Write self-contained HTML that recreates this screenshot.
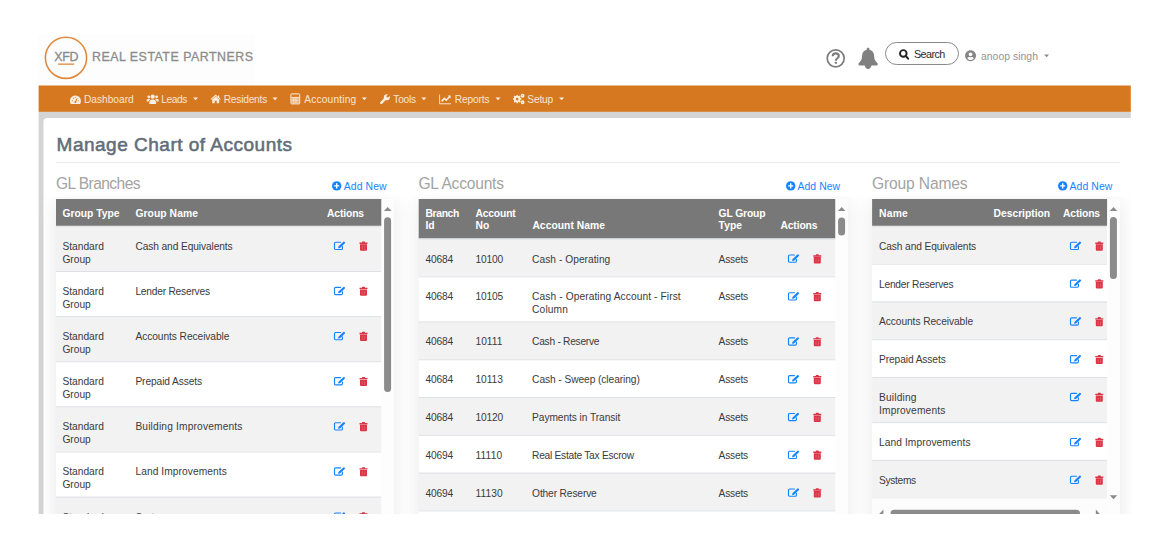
<!DOCTYPE html>
<html lang="en">
<head>
<meta charset="utf-8">
<title>Manage Chart of Accounts</title>
<style>
html,body{margin:0;padding:0;background:#fff}
body{width:1170px;height:550px;overflow:hidden;position:relative;font-family:"Liberation Sans",sans-serif}
#shot{position:absolute;left:38px;top:35px;width:1093px;height:479px;overflow:hidden;background:#fff}
#in{position:absolute;left:-38px;top:-35px;width:1170px;height:550px}
#in header,#in nav,#in main,#in section{position:absolute;left:0;top:0;width:0;height:0;display:block}
#in div,#in svg,.t{position:absolute;display:block;margin:0;padding:0}
.t{white-space:nowrap;font-weight:400;font-style:normal;text-decoration:none}
</style>
</head>
<body>
<div id="shot"><div id="in">
<header>
<svg style="left:38px;top:35px" width="218" height="52"><rect width="217" height="51" fill="#fdfdfd"/></svg>
<svg style="left:38px;top:35px" width="217" height="51" viewBox="38 35 217 51">
<circle cx="66" cy="57.8" r="20.600" fill="none" stroke="#e08a40" stroke-width="1.600"/>
<rect x="58" y="63.500" width="16.200" height="1.300" fill="#e08a40"/>
</svg>
<svg style="left:824px;top:46px" width="24" height="24" viewBox="824 46 24 24">
<circle cx="835.7" cy="58.3" r="8.500" fill="none" stroke="#7d7d7d" stroke-width="1.700"/>
<path d="M832.700 56.300c0-1.800 1.300-2.900 3-2.900 1.800 0 3.100 1.100 3.100 2.700 0 1.200-.7 1.800-1.600 2.400-.8.600-1.300 1-1.300 2v.3" fill="none" stroke="#7d7d7d" stroke-width="2.100"/>
<rect x="834.800" y="61.700" width="2.200" height="2.100" rx=".5" fill="#7d7d7d"/>
</svg>
<svg style="left:856px;top:46px" width="24" height="26" viewBox="856 46 24 26">
<path d="M868.100 47.800c.8 0 1.400.6 1.400 1.400v.5c2.700.6 4.600 3 4.600 5.900 0 3.900 1.200 5.600 3.200 7.400.5.500.7 1.100.4 1.700-.2.500-.7.800-1.300.800h-4.900c-.3 1.900-1.700 3.600-3.400 3.600s-3.100-1.700-3.400-3.600h-4.900c-.6 0-1.100-.3-1.300-.8-.3-.6-.1-1.200.4-1.700 2-1.800 3.200-3.500 3.200-7.400 0-2.900 1.900-5.300 4.600-5.900v-.5c0-.8.600-1.400 1.400-1.400z" fill="#808080"/>
</svg>
<div style="left:885.3px;top:42.3px;width:73.4px;height:22.6px;box-sizing:border-box;border:1px solid #8a8a8a;border-radius:11.5px;background:#fff"></div>
<svg style="left:897px;top:48px" width="14" height="14" viewBox="897 50 14 14">
<circle cx="903.300" cy="55.400" r="3.300" fill="none" stroke="#222" stroke-width="1.900"/>
<path d="M905.700 57.900l2.400 2.800" stroke="#222" stroke-width="2" stroke-linecap="round"/>
</svg>
<svg style="left:965px;top:50px" width="12" height="12"><g transform="translate(0.1 0.1) scale(0.0220 0.0219)"><path fill="#858585" fill-rule="evenodd" d="M248 8C111 8 0 119 0 256s111 248 248 248 248-111 248-248S385 8 248 8zm0 96c48.600 0 88 39.400 88 88s-39.400 88-88 88-88-39.400-88-88 39.400-88 88-88zm0 344c-58.700 0-111.300-26.600-146.500-68.200 18.800-35.400 55.600-59.800 98.500-59.800 2.400 0 4.800.4 7.100 1.100 13 4.200 26.600 6.900 40.900 6.900s28-2.700 40.900-6.900c2.300-.7 4.700-1.100 7.100-1.100 42.900 0 79.700 24.400 98.500 59.800C359.300 421.400 306.700 448 248 448z"/></g></svg>
<svg style="left:1044px;top:54px" width="6" height="4"><g transform="translate(0.1 0.5)"><path d="M0 0h5L2.500 2.800z" fill="#8a8a8a"/></g></svg>
<span class="t" style="left:54.2px;top:49px;font-size:12.4px;line-height:17px;color:#8a8a8a;letter-spacing:-0.27px;-webkit-text-stroke:.3px #8a8a8a;">XFD</span>
<span class="t" style="left:92px;top:49px;font-size:12.4px;line-height:17px;color:#8c8c8c;letter-spacing:0.5px;-webkit-text-stroke:.3px #8c8c8c;">REAL ESTATE PARTNERS</span>
<span class="t" style="left:914px;top:47px;font-size:10.8px;line-height:15px;color:#2a2a2a;letter-spacing:-0.6px;">Search</span>
<a class="t" href="#" style="left:981px;top:49px;font-size:10.4px;line-height:15px;color:#949494;letter-spacing:0.03px;">anoop singh</a>
</header>
<nav>
<svg style="left:38px;top:85px" width="1094" height="28"><g transform="translate(0.6 0.5)"><rect width="1092.2" height="26.4" fill="#d6781f"/></g></svg>
<svg style="left:69px;top:94px" width="14" height="13"><g transform="translate(0.4 0)"><path d="M6 1.500a5.500 5.500 0 0 0-4.800 8.200c.1.200.3.300.5.300h8.600c.2 0 .4-.1.500-.3A5.500 5.500 0 0 0 6 1.500z" fill="#fbeee0"/><path d="M6 8.200L7.700 4.300" stroke="#d6781f" stroke-width="1"/><circle cx="6" cy="8" r="1" fill="#d6781f"/><circle cx="3" cy="6.700" r=".55" fill="#d6781f"/><circle cx="9" cy="6.700" r=".55" fill="#d6781f"/><circle cx="4" cy="4.200" r=".55" fill="#d6781f"/><circle cx="6" cy="3.200" r=".55" fill="#d6781f"/></g></svg>
<svg style="left:146px;top:93px" width="14" height="13"><g transform="translate(0.7 0.4)"><circle cx="6" cy="3.300" r="2.100" fill="#fbeee0"/><circle cx="2.100" cy="3.400" r="1.400" fill="#fbeee0"/><circle cx="9.900" cy="3.400" r="1.400" fill="#fbeee0"/><path d="M2.600 10.500v-1.300c0-1.700 1.300-3 3-3h.8c1.700 0 3 1.300 3 3v1.300z" fill="#fbeee0"/><path d="M0 8.200v-1c0-1 .8-1.800 1.800-1.800h.6c.4 0 .8.100 1.100.4-.9.700-1.500 1.700-1.600 2.400zM12 8.200v-1c0-1-.8-1.800-1.800-1.800h-.6c-.4 0-.8.100-1.100.4.900.7 1.500 1.700 1.600 2.400z" fill="#fbeee0"/></g></svg>
<svg style="left:193px;top:97px" width="6" height="4"><g transform="translate(0.1 0.5)"><path d="M0 0h5L2.500 2.800z" fill="#fbeee0"/></g></svg>
<svg style="left:210px;top:93px" width="14" height="13"><g transform="translate(0.7 0.4)"><path d="M5 1.200L0 5.600l.6.700L5 2.500l4.400 3.800.6-.7-1.500-1.300V2h-1.200v1.300z" fill="#fbeee0"/><path d="M1.500 6.200L5 3.200l3.500 3v3.600H6V7.300H4v2.500H1.500z" fill="#fbeee0"/></g></svg>
<svg style="left:272px;top:97px" width="6" height="4"><g transform="translate(0.5 0.5)"><path d="M0 0h5L2.500 2.800z" fill="#fbeee0"/></g></svg>
<svg style="left:290px;top:93px" width="14" height="13"><g transform="translate(0.4 0.4)"><rect x=".5" y=".5" width="8.800" height="10" rx=".6" fill="none" stroke="#fbeee0" stroke-width="1"/><rect x="1" y="4" width="7.800" height="6" fill="#fbeee0" opacity=".55"/><path d="M1 4h7.800" stroke="#fbeee0" stroke-width=".9"/><path d="M3.200 4.400v5.600M5.500 4.400v5.600M1 6.800h6.500" stroke="#fbeee0" stroke-width=".7"/></g></svg>
<svg style="left:361px;top:97px" width="7" height="4"><g transform="translate(0.8 0.5)"><path d="M0 0h5L2.500 2.800z" fill="#fbeee0"/></g></svg>
<svg style="left:380px;top:93px" width="13" height="13"><g transform="translate(0 0.4)"><path d="M9.700 2.600L8.100 4.200 6.700 3.900 6.400 2.500 8 .9C6.900.5 5.600.8 4.700 1.700c-.9.900-1.100 2.100-.7 3.200L.4 8.500c-.5.500-.5 1.300 0 1.800s1.300.5 1.800 0l3.600-3.600c1.100.4 2.300.2 3.200-.7.900-.9 1.100-2.200.7-3.400z" fill="#fbeee0"/></g></svg>
<svg style="left:421px;top:97px" width="6" height="4"><g transform="translate(0.4 0.5)"><path d="M0 0h5L2.500 2.800z" fill="#fbeee0"/></g></svg>
<svg style="left:439px;top:93px" width="13" height="13"><g transform="translate(0 0.4)"><path d="M.6 1.300v9.100h11.400" fill="none" stroke="#fbeee0" stroke-width="1" opacity=".9"/><path d="M2.600 8l2.700-3 1.900 1.800 3.300-3.500" fill="none" stroke="#fbeee0" stroke-width="1.600"/><path d="M8.600 2.100h3v3z" fill="#fbeee0"/></g></svg>
<svg style="left:495px;top:97px" width="6" height="4"><g transform="translate(0.5 0.5)"><path d="M0 0h5L2.500 2.800z" fill="#fbeee0"/></g></svg>
<svg style="left:513px;top:93px" width="14" height="13"><g transform="translate(0.3 0.4)"><circle cx="3.900" cy="5.700" r="2.300" fill="none" stroke="#fbeee0" stroke-width="2"/><g stroke="#fbeee0" stroke-width="1.500"><path d="M3.900 1.500v8.400M-.3 5.700h8.400M.9 2.700l6 6M6.900 2.700l-6 6"/></g><circle cx="3.900" cy="5.700" r="1.300" fill="#d6781f"/><circle cx="9.300" cy="2.400" r="1.200" fill="none" stroke="#fbeee0" stroke-width="1.500"/><circle cx="9.300" cy="8.800" r="1.200" fill="none" stroke="#fbeee0" stroke-width="1.500"/></g></svg>
<svg style="left:559px;top:97px" width="6" height="4"><g transform="translate(0.1 0.5)"><path d="M0 0h5L2.500 2.800z" fill="#fbeee0"/></g></svg>
<a class="t" href="#" style="left:84px;top:93px;font-size:10.2px;line-height:14px;color:#f8e5d3;letter-spacing:-0.02px;">Dashboard</a>
<a class="t" href="#" style="left:161.3px;top:93px;font-size:10.2px;line-height:14px;color:#f8e5d3;letter-spacing:-0.41px;">Leads</a>
<a class="t" href="#" style="left:223.7px;top:93px;font-size:10.2px;line-height:14px;color:#f8e5d3;letter-spacing:-0.22px;">Residents</a>
<a class="t" href="#" style="left:304.3px;top:93px;font-size:10.2px;line-height:14px;color:#f8e5d3;letter-spacing:0.16px;">Accounting</a>
<a class="t" href="#" style="left:393.3px;top:93px;font-size:10.2px;line-height:14px;color:#f8e5d3;letter-spacing:-0.22px;">Tools</a>
<a class="t" href="#" style="left:454.7px;top:93px;font-size:10.2px;line-height:14px;color:#f8e5d3;letter-spacing:-0.12px;">Reports</a>
<a class="t" href="#" style="left:527.3px;top:93px;font-size:10.2px;line-height:14px;color:#f8e5d3;letter-spacing:-0.18px;">Setup</a>
</nav>
<main>
<svg style="left:38px;top:111px" width="1094" height="412"><g transform="translate(0.6 0.9)"><rect width="1092.2" height="410" fill="#d4d4d4"/></g></svg>
<svg style="left:43px;top:118px" width="1096" height="411"><g transform="translate(0.45 0)"><rect width="1095" height="410" rx="4" fill="#fff"/></g></svg>
<svg style="left:56px;top:162px" width="1065" height="2"><g transform="translate(0 0.2)"><rect width="1064" height="0.9" fill="#e9e9e9"/></g></svg>
<h1 class="t" style="left:56.6px;top:131px;font-size:19px;line-height:27px;color:#636d79;letter-spacing:0.5px;-webkit-text-stroke:.55px #636d79;">Manage Chart of Accounts</h1>
<div style="left:56px;top:199px;width:338px;height:330px;box-shadow:0 2px 20px rgba(0,0,0,.095);background:#fff"></div>
<div style="left:419px;top:199px;width:429px;height:330px;box-shadow:0 2px 20px rgba(0,0,0,.095);background:#fff"></div>
<div style="left:872px;top:199px;width:248px;height:330px;box-shadow:0 2px 20px rgba(0,0,0,.095);background:#fff"></div>
<div style="left:44px;top:164px;width:1087px;height:30px;background:#fff"></div><div style="left:44px;top:194px;width:1087px;height:5px;background:linear-gradient(#fff,rgba(255,255,255,0))"></div>
<section>
<svg style="left:332px;top:181px" width="10" height="11"><g transform="translate(0 0.2) scale(0.9400 0.9400)"><circle cx="5" cy="5" r="5" fill="#1584ff"/><path d="M5 2.300v5.400M2.300 5h5.400" stroke="#fff" stroke-width="1.500"/></g></svg>
<svg style="left:56px;top:199px" width="326" height="28"><rect width="325.5" height="26.9" fill="#787878"/></svg>
<svg style="left:56px;top:225px" width="326" height="47"><g transform="translate(0 0.9)"><rect width="325.5" height="45.12" fill="#f2f2f2"/></g></svg>
<svg style="left:56px;top:225px" width="326" height="3"><g transform="translate(0 0.9)"><rect width="325.5" height="1" fill="#dde1e5"/></g></svg>
<svg style="left:333px;top:241px" width="13" height="10"><g transform="translate(0.9 0.7) scale(1.0000 0.9767)"><path d="M6.600 .6H1.700a1.100 1.100 0 0 0-1.100 1.100v5.200a1.100 1.100 0 0 0 1.100 1.100h5.700a1.100 1.100 0 0 0 1.100-1.100V5" fill="none" stroke="#1584ff" stroke-width="1.150" stroke-linecap="round"/><path d="M9.500 .1a.7.7 0 0 1 1 0l.5.500a.7.7 0 0 1 0 1L6.100 6.400 4.200 6.700 4.500 4.900z" fill="#1584ff"/></g></svg>
<svg style="left:359px;top:241px" width="9" height="11"><g transform="translate(0.5 0.55) scale(1.0000 1.0222)"><path d="M3 0h2a.5.500 0 0 1 .5.500V1H8v1.400H0V1h2.500V.5A.5.500 0 0 1 3 0z" fill="#dc3545"/><path d="M.5 2.700h7v5.300a1 1 0 0 1-1 1h-5a1 1 0 0 1-1-1z" fill="#dc3545"/><path d="M2.800 4.200v3.500M5.200 4.200v3.500" stroke="#e8707b" stroke-width=".6"/></g></svg>
<svg style="left:56px;top:271px" width="326" height="46"><g transform="translate(0 0.02)"><rect width="325.5" height="45.12" fill="#fff"/></g></svg>
<svg style="left:56px;top:271px" width="326" height="2"><g transform="translate(0 0.02)"><rect width="325.5" height="1" fill="#dde1e5"/></g></svg>
<svg style="left:333px;top:286px" width="13" height="10"><g transform="translate(0.9 0.82) scale(1.0000 0.9767)"><path d="M6.600 .6H1.700a1.100 1.100 0 0 0-1.100 1.100v5.200a1.100 1.100 0 0 0 1.100 1.100h5.700a1.100 1.100 0 0 0 1.100-1.100V5" fill="none" stroke="#1584ff" stroke-width="1.150" stroke-linecap="round"/><path d="M9.500 .1a.7.7 0 0 1 1 0l.5.500a.7.7 0 0 1 0 1L6.100 6.400 4.200 6.700 4.500 4.900z" fill="#1584ff"/></g></svg>
<svg style="left:359px;top:286px" width="9" height="11"><g transform="translate(0.5 0.67) scale(1.0000 1.0222)"><path d="M3 0h2a.5.500 0 0 1 .5.500V1H8v1.400H0V1h2.500V.5A.5.500 0 0 1 3 0z" fill="#dc3545"/><path d="M.5 2.700h7v5.300a1 1 0 0 1-1 1h-5a1 1 0 0 1-1-1z" fill="#dc3545"/><path d="M2.800 4.200v3.500M5.200 4.200v3.500" stroke="#e8707b" stroke-width=".6"/></g></svg>
<svg style="left:56px;top:316px" width="326" height="46"><g transform="translate(0 0.14)"><rect width="325.5" height="45.12" fill="#f2f2f2"/></g></svg>
<svg style="left:56px;top:316px" width="326" height="2"><g transform="translate(0 0.14)"><rect width="325.5" height="1" fill="#dde1e5"/></g></svg>
<svg style="left:333px;top:331px" width="13" height="10"><g transform="translate(0.9 0.94) scale(1.0000 0.9767)"><path d="M6.600 .6H1.700a1.100 1.100 0 0 0-1.100 1.100v5.200a1.100 1.100 0 0 0 1.100 1.100h5.700a1.100 1.100 0 0 0 1.100-1.100V5" fill="none" stroke="#1584ff" stroke-width="1.150" stroke-linecap="round"/><path d="M9.500 .1a.7.7 0 0 1 1 0l.5.500a.7.7 0 0 1 0 1L6.100 6.400 4.200 6.700 4.500 4.900z" fill="#1584ff"/></g></svg>
<svg style="left:359px;top:331px" width="9" height="11"><g transform="translate(0.5 0.79) scale(1.0000 1.0222)"><path d="M3 0h2a.5.500 0 0 1 .5.500V1H8v1.400H0V1h2.500V.5A.5.500 0 0 1 3 0z" fill="#dc3545"/><path d="M.5 2.700h7v5.300a1 1 0 0 1-1 1h-5a1 1 0 0 1-1-1z" fill="#dc3545"/><path d="M2.800 4.200v3.500M5.200 4.200v3.500" stroke="#e8707b" stroke-width=".6"/></g></svg>
<svg style="left:56px;top:361px" width="326" height="46"><g transform="translate(0 0.26)"><rect width="325.5" height="45.12" fill="#fff"/></g></svg>
<svg style="left:56px;top:361px" width="326" height="2"><g transform="translate(0 0.26)"><rect width="325.5" height="1" fill="#dde1e5"/></g></svg>
<svg style="left:333px;top:377px" width="13" height="9"><g transform="translate(0.9 0.06) scale(1.0000 0.9767)"><path d="M6.600 .6H1.700a1.100 1.100 0 0 0-1.100 1.100v5.200a1.100 1.100 0 0 0 1.100 1.100h5.700a1.100 1.100 0 0 0 1.100-1.100V5" fill="none" stroke="#1584ff" stroke-width="1.150" stroke-linecap="round"/><path d="M9.500 .1a.7.7 0 0 1 1 0l.5.500a.7.7 0 0 1 0 1L6.100 6.400 4.200 6.700 4.500 4.900z" fill="#1584ff"/></g></svg>
<svg style="left:359px;top:376px" width="9" height="11"><g transform="translate(0.5 0.91) scale(1.0000 1.0222)"><path d="M3 0h2a.5.500 0 0 1 .5.500V1H8v1.400H0V1h2.500V.5A.5.500 0 0 1 3 0z" fill="#dc3545"/><path d="M.5 2.700h7v5.300a1 1 0 0 1-1 1h-5a1 1 0 0 1-1-1z" fill="#dc3545"/><path d="M2.800 4.200v3.500M5.200 4.200v3.500" stroke="#e8707b" stroke-width=".6"/></g></svg>
<svg style="left:56px;top:406px" width="326" height="46"><g transform="translate(0 0.38)"><rect width="325.5" height="45.12" fill="#f2f2f2"/></g></svg>
<svg style="left:56px;top:406px" width="326" height="2"><g transform="translate(0 0.38)"><rect width="325.5" height="1" fill="#dde1e5"/></g></svg>
<svg style="left:333px;top:422px" width="13" height="10"><g transform="translate(0.9 0.18) scale(1.0000 0.9767)"><path d="M6.600 .6H1.700a1.100 1.100 0 0 0-1.100 1.100v5.200a1.100 1.100 0 0 0 1.100 1.100h5.700a1.100 1.100 0 0 0 1.100-1.100V5" fill="none" stroke="#1584ff" stroke-width="1.150" stroke-linecap="round"/><path d="M9.500 .1a.7.7 0 0 1 1 0l.5.500a.7.7 0 0 1 0 1L6.100 6.400 4.200 6.700 4.500 4.900z" fill="#1584ff"/></g></svg>
<svg style="left:359px;top:422px" width="9" height="10"><g transform="translate(0.5 0.03) scale(1.0000 1.0222)"><path d="M3 0h2a.5.500 0 0 1 .5.500V1H8v1.400H0V1h2.500V.5A.5.500 0 0 1 3 0z" fill="#dc3545"/><path d="M.5 2.700h7v5.300a1 1 0 0 1-1 1h-5a1 1 0 0 1-1-1z" fill="#dc3545"/><path d="M2.800 4.200v3.500M5.200 4.200v3.500" stroke="#e8707b" stroke-width=".6"/></g></svg>
<svg style="left:56px;top:451px" width="326" height="47"><g transform="translate(0 0.5)"><rect width="325.5" height="45.12" fill="#fff"/></g></svg>
<svg style="left:56px;top:451px" width="326" height="2"><g transform="translate(0 0.5)"><rect width="325.5" height="1" fill="#dde1e5"/></g></svg>
<svg style="left:333px;top:467px" width="13" height="10"><g transform="translate(0.9 0.3) scale(1.0000 0.9767)"><path d="M6.600 .6H1.700a1.100 1.100 0 0 0-1.100 1.100v5.200a1.100 1.100 0 0 0 1.100 1.100h5.700a1.100 1.100 0 0 0 1.100-1.100V5" fill="none" stroke="#1584ff" stroke-width="1.150" stroke-linecap="round"/><path d="M9.500 .1a.7.7 0 0 1 1 0l.5.500a.7.7 0 0 1 0 1L6.100 6.400 4.200 6.700 4.500 4.900z" fill="#1584ff"/></g></svg>
<svg style="left:359px;top:467px" width="9" height="10"><g transform="translate(0.5 0.15) scale(1.0000 1.0222)"><path d="M3 0h2a.5.500 0 0 1 .5.500V1H8v1.400H0V1h2.500V.5A.5.500 0 0 1 3 0z" fill="#dc3545"/><path d="M.5 2.700h7v5.300a1 1 0 0 1-1 1h-5a1 1 0 0 1-1-1z" fill="#dc3545"/><path d="M2.800 4.200v3.500M5.200 4.200v3.500" stroke="#e8707b" stroke-width=".6"/></g></svg>
<svg style="left:56px;top:496px" width="326" height="47"><g transform="translate(0 0.62)"><rect width="325.5" height="45.12" fill="#f2f2f2"/></g></svg>
<svg style="left:56px;top:496px" width="326" height="3"><g transform="translate(0 0.62)"><rect width="325.5" height="1" fill="#dde1e5"/></g></svg>
<svg style="left:333px;top:512px" width="13" height="10"><g transform="translate(0.9 0.42) scale(1.0000 0.9767)"><path d="M6.600 .6H1.700a1.100 1.100 0 0 0-1.100 1.100v5.200a1.100 1.100 0 0 0 1.100 1.100h5.700a1.100 1.100 0 0 0 1.100-1.100V5" fill="none" stroke="#1584ff" stroke-width="1.150" stroke-linecap="round"/><path d="M9.500 .1a.7.7 0 0 1 1 0l.5.500a.7.7 0 0 1 0 1L6.100 6.400 4.200 6.700 4.500 4.900z" fill="#1584ff"/></g></svg>
<svg style="left:359px;top:512px" width="9" height="10"><g transform="translate(0.5 0.27) scale(1.0000 1.0222)"><path d="M3 0h2a.5.500 0 0 1 .5.500V1H8v1.400H0V1h2.500V.5A.5.500 0 0 1 3 0z" fill="#dc3545"/><path d="M.5 2.700h7v5.300a1 1 0 0 1-1 1h-5a1 1 0 0 1-1-1z" fill="#dc3545"/><path d="M2.800 4.200v3.500M5.200 4.200v3.500" stroke="#e8707b" stroke-width=".6"/></g></svg>
<svg style="left:381px;top:199px" width="14" height="322"><g transform="translate(0.6 0)"><rect width="12.4" height="321" fill="#fdfdfd"/></g></svg>
<svg style="left:381px;top:205px" width="14" height="9"><g transform="translate(0.6 0)"><path d="M2.300 5.900L6.100 1.900l3.800 4z" fill="#8b8b8b"/></g></svg>
<svg style="left:384px;top:217px" width="8" height="176"><g transform="translate(0.1 0.2)"><rect width="7" height="174.8" rx="3.5" fill="#8b8b8b"/></g></svg>
<h2 class="t" style="left:56px;top:173px;font-size:15.6px;line-height:22px;color:#a3a3a3;letter-spacing:-0.59px;">GL Branches</h2>
<a class="t" href="#" style="left:343.8px;top:179px;font-size:10.4px;line-height:15px;color:#1584ff;letter-spacing:0.09px;">Add New</a>
<b class="t" style="left:62.4px;top:207px;font-size:10.3px;line-height:14px;color:#fff;font-weight:700;">Group Type</b>
<b class="t" style="left:135.4px;top:207px;font-size:10.3px;line-height:14px;color:#fff;font-weight:700;letter-spacing:0.08px;">Group Name</b>
<b class="t" style="left:327px;top:207px;font-size:10.3px;line-height:14px;color:#fff;font-weight:700;letter-spacing:-0.11px;">Actions</b>
<span class="t" style="left:62.4px;top:240px;font-size:10.2px;line-height:14px;color:#3a3a3a;letter-spacing:0.01px;">Standard</span>
<span class="t" style="left:62.4px;top:253px;font-size:10.2px;line-height:14px;color:#3a3a3a;letter-spacing:0.01px;">Group</span>
<span class="t" style="left:135.4px;top:240px;font-size:10.2px;line-height:14px;color:#3a3a3a;letter-spacing:-0.1px;">Cash and Equivalents</span>
<span class="t" style="left:62.4px;top:285px;font-size:10.2px;line-height:14px;color:#3a3a3a;letter-spacing:0.01px;">Standard</span>
<span class="t" style="left:62.4px;top:298px;font-size:10.2px;line-height:14px;color:#3a3a3a;letter-spacing:0.01px;">Group</span>
<span class="t" style="left:135.4px;top:285px;font-size:10.2px;line-height:14px;color:#3a3a3a;letter-spacing:-0.21px;">Lender Reserves</span>
<span class="t" style="left:62.4px;top:330px;font-size:10.2px;line-height:14px;color:#3a3a3a;letter-spacing:0.01px;">Standard</span>
<span class="t" style="left:62.4px;top:343px;font-size:10.2px;line-height:14px;color:#3a3a3a;letter-spacing:0.01px;">Group</span>
<span class="t" style="left:135.4px;top:330px;font-size:10.2px;line-height:14px;color:#3a3a3a;letter-spacing:-0.06px;">Accounts Receivable</span>
<span class="t" style="left:62.4px;top:375px;font-size:10.2px;line-height:14px;color:#3a3a3a;letter-spacing:0.01px;">Standard</span>
<span class="t" style="left:62.4px;top:388px;font-size:10.2px;line-height:14px;color:#3a3a3a;letter-spacing:0.01px;">Group</span>
<span class="t" style="left:135.4px;top:375px;font-size:10.2px;line-height:14px;color:#3a3a3a;letter-spacing:-0.09px;">Prepaid Assets</span>
<span class="t" style="left:62.4px;top:420px;font-size:10.2px;line-height:14px;color:#3a3a3a;letter-spacing:0.01px;">Standard</span>
<span class="t" style="left:62.4px;top:433px;font-size:10.2px;line-height:14px;color:#3a3a3a;letter-spacing:0.01px;">Group</span>
<span class="t" style="left:135.4px;top:420px;font-size:10.2px;line-height:14px;color:#3a3a3a;letter-spacing:0.17px;">Building Improvements</span>
<span class="t" style="left:62.4px;top:465px;font-size:10.2px;line-height:14px;color:#3a3a3a;letter-spacing:0.01px;">Standard</span>
<span class="t" style="left:62.4px;top:478px;font-size:10.2px;line-height:14px;color:#3a3a3a;letter-spacing:0.01px;">Group</span>
<span class="t" style="left:135.4px;top:465px;font-size:10.2px;line-height:14px;color:#3a3a3a;letter-spacing:0.09px;">Land Improvements</span>
<span class="t" style="left:62.4px;top:511px;font-size:10.2px;line-height:14px;color:#3a3a3a;letter-spacing:0.01px;">Standard</span>
<span class="t" style="left:62.4px;top:523px;font-size:10.2px;line-height:14px;color:#3a3a3a;letter-spacing:0.01px;">Group</span>
<span class="t" style="left:135.4px;top:511px;font-size:10.2px;line-height:14px;color:#3a3a3a;letter-spacing:-0.32px;">Systems</span>
</section>
<section>
<svg style="left:786px;top:181px" width="10" height="11"><g transform="translate(0 0.2) scale(0.9400 0.9400)"><circle cx="5" cy="5" r="5" fill="#1584ff"/><path d="M5 2.300v5.400M2.300 5h5.400" stroke="#fff" stroke-width="1.500"/></g></svg>
<svg style="left:418px;top:199px" width="418" height="41"><g transform="translate(0.7 0)"><rect width="416.7" height="39.6" fill="#787878"/></g></svg>
<svg style="left:418px;top:238px" width="418" height="39"><g transform="translate(0.7 0.6)"><rect width="416.7" height="37.78" fill="#f2f2f2"/></g></svg>
<svg style="left:418px;top:238px" width="418" height="3"><g transform="translate(0.7 0.6)"><rect width="416.7" height="1" fill="#dde1e5"/></g></svg>
<svg style="left:787px;top:254px" width="13" height="10"><g transform="translate(0.9 0.4) scale(1.0000 0.9767)"><path d="M6.600 .6H1.700a1.100 1.100 0 0 0-1.100 1.100v5.200a1.100 1.100 0 0 0 1.100 1.100h5.700a1.100 1.100 0 0 0 1.100-1.100V5" fill="none" stroke="#1584ff" stroke-width="1.150" stroke-linecap="round"/><path d="M9.500 .1a.7.7 0 0 1 1 0l.5.500a.7.7 0 0 1 0 1L6.100 6.400 4.200 6.700 4.500 4.900z" fill="#1584ff"/></g></svg>
<svg style="left:813px;top:254px" width="9" height="10"><g transform="translate(0.3 0.25) scale(1.0000 1.0222)"><path d="M3 0h2a.5.500 0 0 1 .5.500V1H8v1.400H0V1h2.500V.5A.5.500 0 0 1 3 0z" fill="#dc3545"/><path d="M.5 2.700h7v5.300a1 1 0 0 1-1 1h-5a1 1 0 0 1-1-1z" fill="#dc3545"/><path d="M2.800 4.200v3.500M5.200 4.200v3.500" stroke="#e8707b" stroke-width=".6"/></g></svg>
<svg style="left:418px;top:276px" width="418" height="46"><g transform="translate(0.7 0.38)"><rect width="416.7" height="45.12" fill="#fff"/></g></svg>
<svg style="left:418px;top:276px" width="418" height="2"><g transform="translate(0.7 0.38)"><rect width="416.7" height="1" fill="#dde1e5"/></g></svg>
<svg style="left:787px;top:292px" width="13" height="10"><g transform="translate(0.9 0.18) scale(1.0000 0.9767)"><path d="M6.600 .6H1.700a1.100 1.100 0 0 0-1.100 1.100v5.200a1.100 1.100 0 0 0 1.100 1.100h5.700a1.100 1.100 0 0 0 1.100-1.100V5" fill="none" stroke="#1584ff" stroke-width="1.150" stroke-linecap="round"/><path d="M9.500 .1a.7.7 0 0 1 1 0l.5.500a.7.7 0 0 1 0 1L6.100 6.400 4.200 6.700 4.500 4.900z" fill="#1584ff"/></g></svg>
<svg style="left:813px;top:292px" width="9" height="10"><g transform="translate(0.3 0.03) scale(1.0000 1.0222)"><path d="M3 0h2a.5.500 0 0 1 .5.500V1H8v1.400H0V1h2.500V.5A.5.500 0 0 1 3 0z" fill="#dc3545"/><path d="M.5 2.700h7v5.300a1 1 0 0 1-1 1h-5a1 1 0 0 1-1-1z" fill="#dc3545"/><path d="M2.800 4.200v3.500M5.200 4.200v3.500" stroke="#e8707b" stroke-width=".6"/></g></svg>
<svg style="left:418px;top:321px" width="418" height="39"><g transform="translate(0.7 0.5)"><rect width="416.7" height="37.78" fill="#f2f2f2"/></g></svg>
<svg style="left:418px;top:321px" width="418" height="2"><g transform="translate(0.7 0.5)"><rect width="416.7" height="1" fill="#dde1e5"/></g></svg>
<svg style="left:787px;top:337px" width="13" height="10"><g transform="translate(0.9 0.3) scale(1.0000 0.9767)"><path d="M6.600 .6H1.700a1.100 1.100 0 0 0-1.100 1.100v5.200a1.100 1.100 0 0 0 1.100 1.100h5.700a1.100 1.100 0 0 0 1.100-1.100V5" fill="none" stroke="#1584ff" stroke-width="1.150" stroke-linecap="round"/><path d="M9.500 .1a.7.7 0 0 1 1 0l.5.500a.7.7 0 0 1 0 1L6.100 6.400 4.200 6.700 4.500 4.900z" fill="#1584ff"/></g></svg>
<svg style="left:813px;top:337px" width="9" height="10"><g transform="translate(0.3 0.15) scale(1.0000 1.0222)"><path d="M3 0h2a.5.500 0 0 1 .5.500V1H8v1.400H0V1h2.500V.5A.5.500 0 0 1 3 0z" fill="#dc3545"/><path d="M.5 2.700h7v5.300a1 1 0 0 1-1 1h-5a1 1 0 0 1-1-1z" fill="#dc3545"/><path d="M2.800 4.200v3.500M5.200 4.200v3.500" stroke="#e8707b" stroke-width=".6"/></g></svg>
<svg style="left:418px;top:359px" width="418" height="39"><g transform="translate(0.7 0.28)"><rect width="416.7" height="37.78" fill="#fff"/></g></svg>
<svg style="left:418px;top:359px" width="418" height="2"><g transform="translate(0.7 0.28)"><rect width="416.7" height="1" fill="#dde1e5"/></g></svg>
<svg style="left:787px;top:375px" width="13" height="9"><g transform="translate(0.9 0.08) scale(1.0000 0.9767)"><path d="M6.600 .6H1.700a1.100 1.100 0 0 0-1.100 1.100v5.200a1.100 1.100 0 0 0 1.100 1.100h5.700a1.100 1.100 0 0 0 1.100-1.100V5" fill="none" stroke="#1584ff" stroke-width="1.150" stroke-linecap="round"/><path d="M9.500 .1a.7.7 0 0 1 1 0l.5.500a.7.7 0 0 1 0 1L6.100 6.400 4.200 6.700 4.500 4.900z" fill="#1584ff"/></g></svg>
<svg style="left:813px;top:374px" width="9" height="11"><g transform="translate(0.3 0.93) scale(1.0000 1.0222)"><path d="M3 0h2a.5.500 0 0 1 .5.500V1H8v1.400H0V1h2.500V.5A.5.500 0 0 1 3 0z" fill="#dc3545"/><path d="M.5 2.700h7v5.300a1 1 0 0 1-1 1h-5a1 1 0 0 1-1-1z" fill="#dc3545"/><path d="M2.800 4.200v3.500M5.200 4.200v3.500" stroke="#e8707b" stroke-width=".6"/></g></svg>
<svg style="left:418px;top:397px" width="418" height="39"><g transform="translate(0.7 0.06)"><rect width="416.7" height="37.78" fill="#f2f2f2"/></g></svg>
<svg style="left:418px;top:397px" width="418" height="2"><g transform="translate(0.7 0.06)"><rect width="416.7" height="1" fill="#dde1e5"/></g></svg>
<svg style="left:787px;top:412px" width="13" height="10"><g transform="translate(0.9 0.86) scale(1.0000 0.9767)"><path d="M6.600 .6H1.700a1.100 1.100 0 0 0-1.100 1.100v5.200a1.100 1.100 0 0 0 1.100 1.100h5.700a1.100 1.100 0 0 0 1.100-1.100V5" fill="none" stroke="#1584ff" stroke-width="1.150" stroke-linecap="round"/><path d="M9.500 .1a.7.7 0 0 1 1 0l.5.500a.7.7 0 0 1 0 1L6.100 6.400 4.200 6.700 4.500 4.900z" fill="#1584ff"/></g></svg>
<svg style="left:813px;top:412px" width="9" height="11"><g transform="translate(0.3 0.71) scale(1.0000 1.0222)"><path d="M3 0h2a.5.500 0 0 1 .5.500V1H8v1.400H0V1h2.500V.5A.5.500 0 0 1 3 0z" fill="#dc3545"/><path d="M.5 2.700h7v5.300a1 1 0 0 1-1 1h-5a1 1 0 0 1-1-1z" fill="#dc3545"/><path d="M2.800 4.200v3.500M5.200 4.200v3.500" stroke="#e8707b" stroke-width=".6"/></g></svg>
<svg style="left:418px;top:434px" width="418" height="40"><g transform="translate(0.7 0.84)"><rect width="416.7" height="37.78" fill="#fff"/></g></svg>
<svg style="left:418px;top:434px" width="418" height="3"><g transform="translate(0.7 0.84)"><rect width="416.7" height="1" fill="#dde1e5"/></g></svg>
<svg style="left:787px;top:450px" width="13" height="10"><g transform="translate(0.9 0.64) scale(1.0000 0.9767)"><path d="M6.600 .6H1.700a1.100 1.100 0 0 0-1.100 1.100v5.200a1.100 1.100 0 0 0 1.100 1.100h5.700a1.100 1.100 0 0 0 1.100-1.100V5" fill="none" stroke="#1584ff" stroke-width="1.150" stroke-linecap="round"/><path d="M9.500 .1a.7.7 0 0 1 1 0l.5.500a.7.7 0 0 1 0 1L6.100 6.400 4.200 6.700 4.500 4.900z" fill="#1584ff"/></g></svg>
<svg style="left:813px;top:450px" width="9" height="11"><g transform="translate(0.3 0.49) scale(1.0000 1.0222)"><path d="M3 0h2a.5.500 0 0 1 .5.500V1H8v1.400H0V1h2.500V.5A.5.500 0 0 1 3 0z" fill="#dc3545"/><path d="M.5 2.700h7v5.300a1 1 0 0 1-1 1h-5a1 1 0 0 1-1-1z" fill="#dc3545"/><path d="M2.800 4.200v3.500M5.200 4.200v3.500" stroke="#e8707b" stroke-width=".6"/></g></svg>
<svg style="left:418px;top:472px" width="418" height="39"><g transform="translate(0.7 0.62)"><rect width="416.7" height="37.78" fill="#f2f2f2"/></g></svg>
<svg style="left:418px;top:472px" width="418" height="3"><g transform="translate(0.7 0.62)"><rect width="416.7" height="1" fill="#dde1e5"/></g></svg>
<svg style="left:787px;top:488px" width="13" height="10"><g transform="translate(0.9 0.42) scale(1.0000 0.9767)"><path d="M6.600 .6H1.700a1.100 1.100 0 0 0-1.100 1.100v5.200a1.100 1.100 0 0 0 1.100 1.100h5.700a1.100 1.100 0 0 0 1.100-1.100V5" fill="none" stroke="#1584ff" stroke-width="1.150" stroke-linecap="round"/><path d="M9.500 .1a.7.7 0 0 1 1 0l.5.500a.7.7 0 0 1 0 1L6.100 6.400 4.200 6.700 4.500 4.900z" fill="#1584ff"/></g></svg>
<svg style="left:813px;top:488px" width="9" height="10"><g transform="translate(0.3 0.27) scale(1.0000 1.0222)"><path d="M3 0h2a.5.500 0 0 1 .5.500V1H8v1.400H0V1h2.500V.5A.5.500 0 0 1 3 0z" fill="#dc3545"/><path d="M.5 2.700h7v5.300a1 1 0 0 1-1 1h-5a1 1 0 0 1-1-1z" fill="#dc3545"/><path d="M2.800 4.200v3.500M5.200 4.200v3.500" stroke="#e8707b" stroke-width=".6"/></g></svg>
<svg style="left:418px;top:510px" width="418" height="39"><g transform="translate(0.7 0.4)"><rect width="416.7" height="37.78" fill="#fff"/></g></svg>
<svg style="left:418px;top:510px" width="418" height="2"><g transform="translate(0.7 0.4)"><rect width="416.7" height="1" fill="#dde1e5"/></g></svg>
<svg style="left:835px;top:199px" width="14" height="322"><g transform="translate(0.6 0)"><rect width="12.4" height="321" fill="#fdfdfd"/></g></svg>
<svg style="left:835px;top:205px" width="14" height="9"><g transform="translate(0.6 0)"><path d="M2.300 5.900L6.100 1.900l3.800 4z" fill="#8b8b8b"/></g></svg>
<svg style="left:838px;top:217px" width="8" height="19"><g transform="translate(0.1 0.4)"><rect width="7" height="18" rx="3.5" fill="#8b8b8b"/></g></svg>
<h2 class="t" style="left:418.4px;top:173px;font-size:15.6px;line-height:22px;color:#a3a3a3;letter-spacing:-0.22px;">GL Accounts</h2>
<a class="t" href="#" style="left:797.4px;top:179px;font-size:10.4px;line-height:15px;color:#1584ff;letter-spacing:0.09px;">Add New</a>
<b class="t" style="left:425.4px;top:207px;font-size:10.3px;line-height:14px;color:#fff;font-weight:700;letter-spacing:-0.31px;">Branch</b>
<b class="t" style="left:425.4px;top:219px;font-size:10.3px;line-height:14px;color:#fff;font-weight:700;letter-spacing:0.02px;">Id</b>
<b class="t" style="left:475.4px;top:207px;font-size:10.3px;line-height:14px;color:#fff;font-weight:700;letter-spacing:-0.14px;">Account</b>
<b class="t" style="left:475.4px;top:219px;font-size:10.3px;line-height:14px;color:#fff;font-weight:700;letter-spacing:0.23px;">No</b>
<b class="t" style="left:532.4px;top:219px;font-size:10.3px;line-height:14px;color:#fff;font-weight:700;letter-spacing:0.04px;">Account Name</b>
<b class="t" style="left:718.6px;top:207px;font-size:10.3px;line-height:14px;color:#fff;font-weight:700;letter-spacing:-0.13px;">GL Group</b>
<b class="t" style="left:718.6px;top:219px;font-size:10.3px;line-height:14px;color:#fff;font-weight:700;letter-spacing:0.03px;">Type</b>
<b class="t" style="left:780.4px;top:219px;font-size:10.3px;line-height:14px;color:#fff;font-weight:700;letter-spacing:-0.11px;">Actions</b>
<span class="t" style="left:425.4px;top:253px;font-size:10.2px;line-height:14px;color:#3a3a3a;letter-spacing:-0.15px;">40684</span>
<span class="t" style="left:475.4px;top:253px;font-size:10.2px;line-height:14px;color:#3a3a3a;letter-spacing:-0.15px;">10100</span>
<span class="t" style="left:532.1px;top:253px;font-size:10.2px;line-height:14px;color:#3a3a3a;letter-spacing:0.04px;">Cash - Operating</span>
<span class="t" style="left:718.6px;top:253px;font-size:10.2px;line-height:14px;color:#3a3a3a;letter-spacing:-0.2px;">Assets</span>
<span class="t" style="left:425.4px;top:290px;font-size:10.2px;line-height:14px;color:#3a3a3a;letter-spacing:-0.15px;">40684</span>
<span class="t" style="left:475.4px;top:290px;font-size:10.2px;line-height:14px;color:#3a3a3a;letter-spacing:-0.15px;">10105</span>
<span class="t" style="left:532.1px;top:290px;font-size:10.2px;line-height:14px;color:#3a3a3a;letter-spacing:0.1px;">Cash - Operating Account - First</span>
<span class="t" style="left:532.1px;top:303px;font-size:10.2px;line-height:14px;color:#3a3a3a;letter-spacing:0.13px;">Column</span>
<span class="t" style="left:718.6px;top:290px;font-size:10.2px;line-height:14px;color:#3a3a3a;letter-spacing:-0.2px;">Assets</span>
<span class="t" style="left:425.4px;top:335px;font-size:10.2px;line-height:14px;color:#3a3a3a;letter-spacing:-0.15px;">40684</span>
<span class="t" style="left:475.4px;top:335px;font-size:10.2px;line-height:14px;color:#3a3a3a;letter-spacing:0.07px;">10111</span>
<span class="t" style="left:532.1px;top:335px;font-size:10.2px;line-height:14px;color:#3a3a3a;letter-spacing:-0.26px;">Cash - Reserve</span>
<span class="t" style="left:718.6px;top:335px;font-size:10.2px;line-height:14px;color:#3a3a3a;letter-spacing:-0.2px;">Assets</span>
<span class="t" style="left:425.4px;top:373px;font-size:10.2px;line-height:14px;color:#3a3a3a;letter-spacing:-0.15px;">40684</span>
<span class="t" style="left:475.4px;top:373px;font-size:10.2px;line-height:14px;color:#3a3a3a;letter-spacing:-0.04px;">10113</span>
<span class="t" style="left:532.1px;top:373px;font-size:10.2px;line-height:14px;color:#3a3a3a;letter-spacing:-0.07px;">Cash - Sweep (clearing)</span>
<span class="t" style="left:718.6px;top:373px;font-size:10.2px;line-height:14px;color:#3a3a3a;letter-spacing:-0.2px;">Assets</span>
<span class="t" style="left:425.4px;top:411px;font-size:10.2px;line-height:14px;color:#3a3a3a;letter-spacing:-0.15px;">40684</span>
<span class="t" style="left:475.4px;top:411px;font-size:10.2px;line-height:14px;color:#3a3a3a;letter-spacing:-0.15px;">10120</span>
<span class="t" style="left:532.1px;top:411px;font-size:10.2px;line-height:14px;color:#3a3a3a;letter-spacing:-0.07px;">Payments in Transit</span>
<span class="t" style="left:718.6px;top:411px;font-size:10.2px;line-height:14px;color:#3a3a3a;letter-spacing:-0.2px;">Assets</span>
<span class="t" style="left:425.4px;top:449px;font-size:10.2px;line-height:14px;color:#3a3a3a;letter-spacing:-0.15px;">40694</span>
<span class="t" style="left:475.4px;top:449px;font-size:10.2px;line-height:14px;color:#3a3a3a;letter-spacing:0.19px;">11110</span>
<span class="t" style="left:532.1px;top:449px;font-size:10.2px;line-height:14px;color:#3a3a3a;letter-spacing:-0.26px;">Real Estate Tax Escrow</span>
<span class="t" style="left:718.6px;top:449px;font-size:10.2px;line-height:14px;color:#3a3a3a;letter-spacing:-0.2px;">Assets</span>
<span class="t" style="left:425.4px;top:487px;font-size:10.2px;line-height:14px;color:#3a3a3a;letter-spacing:-0.15px;">40694</span>
<span class="t" style="left:475.4px;top:487px;font-size:10.2px;line-height:14px;color:#3a3a3a;letter-spacing:0.11px;">11130</span>
<span class="t" style="left:532.1px;top:487px;font-size:10.2px;line-height:14px;color:#3a3a3a;letter-spacing:-0.13px;">Other Reserve</span>
<span class="t" style="left:718.6px;top:487px;font-size:10.2px;line-height:14px;color:#3a3a3a;letter-spacing:-0.2px;">Assets</span>
</section>
<section>
<svg style="left:1058px;top:181px" width="10" height="11"><g transform="translate(0 0.2) scale(0.9400 0.9400)"><circle cx="5" cy="5" r="5" fill="#1584ff"/><path d="M5 2.300v5.400M2.300 5h5.400" stroke="#fff" stroke-width="1.500"/></g></svg>
<svg style="left:872px;top:199px" width="236" height="28"><g transform="translate(0.1 0)"><rect width="235.1" height="26.9" fill="#787878"/></g></svg>
<svg style="left:872px;top:225px" width="236" height="40"><g transform="translate(0.1 0.9)"><rect width="235.1" height="37.78" fill="#f2f2f2"/></g></svg>
<svg style="left:872px;top:225px" width="236" height="3"><g transform="translate(0.1 0.9)"><rect width="235.1" height="1" fill="#dde1e5"/></g></svg>
<svg style="left:1069px;top:241px" width="13" height="10"><g transform="translate(0.9 0.7) scale(1.0000 0.9767)"><path d="M6.600 .6H1.700a1.100 1.100 0 0 0-1.100 1.100v5.200a1.100 1.100 0 0 0 1.100 1.100h5.700a1.100 1.100 0 0 0 1.100-1.100V5" fill="none" stroke="#1584ff" stroke-width="1.150" stroke-linecap="round"/><path d="M9.500 .1a.7.7 0 0 1 1 0l.5.500a.7.7 0 0 1 0 1L6.100 6.400 4.200 6.700 4.500 4.900z" fill="#1584ff"/></g></svg>
<svg style="left:1095px;top:241px" width="9" height="11"><g transform="translate(0.3 0.55) scale(1.0000 1.0222)"><path d="M3 0h2a.5.500 0 0 1 .5.500V1H8v1.400H0V1h2.500V.5A.5.500 0 0 1 3 0z" fill="#dc3545"/><path d="M.5 2.700h7v5.300a1 1 0 0 1-1 1h-5a1 1 0 0 1-1-1z" fill="#dc3545"/><path d="M2.800 4.200v3.500M5.200 4.200v3.500" stroke="#e8707b" stroke-width=".6"/></g></svg>
<svg style="left:872px;top:263px" width="236" height="39"><g transform="translate(0.1 0.68)"><rect width="235.1" height="37.78" fill="#fff"/></g></svg>
<svg style="left:872px;top:263px" width="236" height="3"><g transform="translate(0.1 0.68)"><rect width="235.1" height="1" fill="#dde1e5"/></g></svg>
<svg style="left:1069px;top:279px" width="13" height="10"><g transform="translate(0.9 0.48) scale(1.0000 0.9767)"><path d="M6.600 .6H1.700a1.100 1.100 0 0 0-1.100 1.100v5.200a1.100 1.100 0 0 0 1.100 1.100h5.700a1.100 1.100 0 0 0 1.100-1.100V5" fill="none" stroke="#1584ff" stroke-width="1.150" stroke-linecap="round"/><path d="M9.500 .1a.7.7 0 0 1 1 0l.5.500a.7.7 0 0 1 0 1L6.100 6.400 4.200 6.700 4.500 4.900z" fill="#1584ff"/></g></svg>
<svg style="left:1095px;top:279px" width="9" height="11"><g transform="translate(0.3 0.33) scale(1.0000 1.0222)"><path d="M3 0h2a.5.500 0 0 1 .5.500V1H8v1.400H0V1h2.500V.5A.5.500 0 0 1 3 0z" fill="#dc3545"/><path d="M.5 2.700h7v5.300a1 1 0 0 1-1 1h-5a1 1 0 0 1-1-1z" fill="#dc3545"/><path d="M2.800 4.200v3.500M5.200 4.200v3.500" stroke="#e8707b" stroke-width=".6"/></g></svg>
<svg style="left:872px;top:301px" width="236" height="39"><g transform="translate(0.1 0.46)"><rect width="235.1" height="37.78" fill="#f2f2f2"/></g></svg>
<svg style="left:872px;top:301px" width="236" height="2"><g transform="translate(0.1 0.46)"><rect width="235.1" height="1" fill="#dde1e5"/></g></svg>
<svg style="left:1069px;top:317px" width="13" height="10"><g transform="translate(0.9 0.26) scale(1.0000 0.9767)"><path d="M6.600 .6H1.700a1.100 1.100 0 0 0-1.100 1.100v5.200a1.100 1.100 0 0 0 1.100 1.100h5.700a1.100 1.100 0 0 0 1.100-1.100V5" fill="none" stroke="#1584ff" stroke-width="1.150" stroke-linecap="round"/><path d="M9.500 .1a.7.7 0 0 1 1 0l.5.500a.7.7 0 0 1 0 1L6.100 6.400 4.200 6.700 4.500 4.900z" fill="#1584ff"/></g></svg>
<svg style="left:1095px;top:317px" width="9" height="10"><g transform="translate(0.3 0.11) scale(1.0000 1.0222)"><path d="M3 0h2a.5.500 0 0 1 .5.500V1H8v1.400H0V1h2.500V.5A.5.500 0 0 1 3 0z" fill="#dc3545"/><path d="M.5 2.700h7v5.300a1 1 0 0 1-1 1h-5a1 1 0 0 1-1-1z" fill="#dc3545"/><path d="M2.800 4.200v3.500M5.200 4.200v3.500" stroke="#e8707b" stroke-width=".6"/></g></svg>
<svg style="left:872px;top:339px" width="236" height="39"><g transform="translate(0.1 0.24)"><rect width="235.1" height="37.78" fill="#fff"/></g></svg>
<svg style="left:872px;top:339px" width="236" height="2"><g transform="translate(0.1 0.24)"><rect width="235.1" height="1" fill="#dde1e5"/></g></svg>
<svg style="left:1069px;top:355px" width="13" height="9"><g transform="translate(0.9 0.04) scale(1.0000 0.9767)"><path d="M6.600 .6H1.700a1.100 1.100 0 0 0-1.100 1.100v5.200a1.100 1.100 0 0 0 1.100 1.100h5.700a1.100 1.100 0 0 0 1.100-1.100V5" fill="none" stroke="#1584ff" stroke-width="1.150" stroke-linecap="round"/><path d="M9.500 .1a.7.7 0 0 1 1 0l.5.500a.7.7 0 0 1 0 1L6.100 6.400 4.200 6.700 4.500 4.900z" fill="#1584ff"/></g></svg>
<svg style="left:1095px;top:354px" width="9" height="11"><g transform="translate(0.3 0.89) scale(1.0000 1.0222)"><path d="M3 0h2a.5.500 0 0 1 .5.500V1H8v1.400H0V1h2.500V.5A.5.500 0 0 1 3 0z" fill="#dc3545"/><path d="M.5 2.700h7v5.300a1 1 0 0 1-1 1h-5a1 1 0 0 1-1-1z" fill="#dc3545"/><path d="M2.800 4.200v3.500M5.200 4.200v3.500" stroke="#e8707b" stroke-width=".6"/></g></svg>
<svg style="left:872px;top:377px" width="236" height="46"><g transform="translate(0.1 0.02)"><rect width="235.1" height="45.12" fill="#f2f2f2"/></g></svg>
<svg style="left:872px;top:377px" width="236" height="2"><g transform="translate(0.1 0.02)"><rect width="235.1" height="1" fill="#dde1e5"/></g></svg>
<svg style="left:1069px;top:392px" width="13" height="10"><g transform="translate(0.9 0.82) scale(1.0000 0.9767)"><path d="M6.600 .6H1.700a1.100 1.100 0 0 0-1.100 1.100v5.200a1.100 1.100 0 0 0 1.100 1.100h5.700a1.100 1.100 0 0 0 1.100-1.100V5" fill="none" stroke="#1584ff" stroke-width="1.150" stroke-linecap="round"/><path d="M9.500 .1a.7.7 0 0 1 1 0l.5.500a.7.7 0 0 1 0 1L6.100 6.400 4.200 6.700 4.500 4.900z" fill="#1584ff"/></g></svg>
<svg style="left:1095px;top:392px" width="9" height="11"><g transform="translate(0.3 0.67) scale(1.0000 1.0222)"><path d="M3 0h2a.5.500 0 0 1 .5.500V1H8v1.400H0V1h2.500V.5A.5.500 0 0 1 3 0z" fill="#dc3545"/><path d="M.5 2.700h7v5.300a1 1 0 0 1-1 1h-5a1 1 0 0 1-1-1z" fill="#dc3545"/><path d="M2.800 4.200v3.500M5.200 4.200v3.500" stroke="#e8707b" stroke-width=".6"/></g></svg>
<svg style="left:872px;top:422px" width="236" height="39"><g transform="translate(0.1 0.14)"><rect width="235.1" height="37.78" fill="#fff"/></g></svg>
<svg style="left:872px;top:422px" width="236" height="2"><g transform="translate(0.1 0.14)"><rect width="235.1" height="1" fill="#dde1e5"/></g></svg>
<svg style="left:1069px;top:437px" width="13" height="10"><g transform="translate(0.9 0.94) scale(1.0000 0.9767)"><path d="M6.600 .6H1.700a1.100 1.100 0 0 0-1.100 1.100v5.200a1.100 1.100 0 0 0 1.100 1.100h5.700a1.100 1.100 0 0 0 1.100-1.100V5" fill="none" stroke="#1584ff" stroke-width="1.150" stroke-linecap="round"/><path d="M9.500 .1a.7.7 0 0 1 1 0l.5.500a.7.7 0 0 1 0 1L6.100 6.400 4.200 6.700 4.500 4.900z" fill="#1584ff"/></g></svg>
<svg style="left:1095px;top:437px" width="9" height="11"><g transform="translate(0.3 0.79) scale(1.0000 1.0222)"><path d="M3 0h2a.5.500 0 0 1 .5.500V1H8v1.400H0V1h2.500V.5A.5.500 0 0 1 3 0z" fill="#dc3545"/><path d="M.5 2.700h7v5.300a1 1 0 0 1-1 1h-5a1 1 0 0 1-1-1z" fill="#dc3545"/><path d="M2.800 4.200v3.500M5.200 4.200v3.500" stroke="#e8707b" stroke-width=".6"/></g></svg>
<svg style="left:872px;top:459px" width="236" height="41"><g transform="translate(0.1 0.92)"><rect width="235.1" height="38.9" fill="#f2f2f2"/></g></svg>
<svg style="left:872px;top:459px" width="236" height="3"><g transform="translate(0.1 0.92)"><rect width="235.1" height="1" fill="#dde1e5"/></g></svg>
<svg style="left:1069px;top:475px" width="13" height="10"><g transform="translate(0.9 0.72) scale(1.0000 0.9767)"><path d="M6.600 .6H1.700a1.100 1.100 0 0 0-1.100 1.100v5.200a1.100 1.100 0 0 0 1.100 1.100h5.700a1.100 1.100 0 0 0 1.100-1.100V5" fill="none" stroke="#1584ff" stroke-width="1.150" stroke-linecap="round"/><path d="M9.500 .1a.7.7 0 0 1 1 0l.5.500a.7.7 0 0 1 0 1L6.100 6.400 4.200 6.700 4.500 4.900z" fill="#1584ff"/></g></svg>
<svg style="left:1095px;top:475px" width="9" height="11"><g transform="translate(0.3 0.57) scale(1.0000 1.0222)"><path d="M3 0h2a.5.500 0 0 1 .5.500V1H8v1.400H0V1h2.500V.5A.5.500 0 0 1 3 0z" fill="#dc3545"/><path d="M.5 2.700h7v5.300a1 1 0 0 1-1 1h-5a1 1 0 0 1-1-1z" fill="#dc3545"/><path d="M2.800 4.200v3.500M5.200 4.200v3.500" stroke="#e8707b" stroke-width=".6"/></g></svg>
<svg style="left:872px;top:498px" width="237" height="22"><g transform="translate(0.1 0.8)"><rect width="236" height="20" fill="#fcfcfc"/></g></svg>
<svg style="left:1107px;top:199px" width="14" height="305"><g transform="translate(0.4 0)"><rect width="12.4" height="304" fill="#fdfdfd"/></g></svg>
<svg style="left:1107px;top:205px" width="14" height="9"><g transform="translate(0.4 0)"><path d="M2.300 5.900L6.100 1.900l3.800 4z" fill="#8b8b8b"/></g></svg>
<svg style="left:1109px;top:217px" width="9" height="63"><g transform="translate(0.9 0)"><rect width="7" height="62" rx="3.5" fill="#8b8b8b"/></g></svg>
<svg style="left:1107px;top:493px" width="14" height="9"><g transform="translate(0.4 0.3)"><path d="M2.300 1.900L6.100 5.900l3.800-4z" fill="#8b8b8b"/></g></svg>
<svg style="left:1107px;top:503px" width="14" height="13"><g transform="translate(0.4 0)"><rect width="12.4" height="12" fill="#fdfdfd"/></g></svg>
<svg style="left:890px;top:509px" width="191" height="9"><g transform="translate(0.6 0.8)"><rect width="189.4" height="7" rx="3.5" fill="#8b8b8b"/></g></svg>
<svg style="left:879px;top:509px" width="6" height="10"><g transform="translate(0.2 0.4) scale(1.0000 1.0750)"><path d="M4.200 0v8L.2 4z" fill="#8b8b8b"/></g></svg>
<svg style="left:1095px;top:509px" width="6" height="10"><g transform="translate(0.6 0.4) scale(0.9200 1.0750)"><path d="M.3 0v8l4-4z" fill="#8b8b8b"/></g></svg>
<h2 class="t" style="left:872px;top:173px;font-size:15.6px;line-height:22px;color:#a3a3a3;letter-spacing:-0.15px;">Group Names</h2>
<a class="t" href="#" style="left:1069.6px;top:179px;font-size:10.4px;line-height:15px;color:#1584ff;letter-spacing:0.09px;">Add New</a>
<b class="t" style="left:879px;top:207px;font-size:10.3px;line-height:14px;color:#fff;font-weight:700;letter-spacing:0.24px;">Name</b>
<b class="t" style="left:993.6px;top:207px;font-size:10.3px;line-height:14px;color:#fff;font-weight:700;letter-spacing:-0.02px;">Description</b>
<b class="t" style="left:1063px;top:207px;font-size:10.3px;line-height:14px;color:#fff;font-weight:700;letter-spacing:-0.11px;">Actions</b>
<span class="t" style="left:879px;top:240px;font-size:10.2px;line-height:14px;color:#3a3a3a;letter-spacing:-0.1px;">Cash and Equivalents</span>
<span class="t" style="left:879px;top:278px;font-size:10.2px;line-height:14px;color:#3a3a3a;letter-spacing:-0.21px;">Lender Reserves</span>
<span class="t" style="left:879px;top:315px;font-size:10.2px;line-height:14px;color:#3a3a3a;letter-spacing:-0.06px;">Accounts Receivable</span>
<span class="t" style="left:879px;top:353px;font-size:10.2px;line-height:14px;color:#3a3a3a;letter-spacing:-0.09px;">Prepaid Assets</span>
<span class="t" style="left:879px;top:391px;font-size:10.2px;line-height:14px;color:#3a3a3a;letter-spacing:0.16px;">Building</span>
<span class="t" style="left:879px;top:404px;font-size:10.2px;line-height:14px;color:#3a3a3a;letter-spacing:0.16px;">Improvements</span>
<span class="t" style="left:879px;top:436px;font-size:10.2px;line-height:14px;color:#3a3a3a;letter-spacing:0.09px;">Land Improvements</span>
<span class="t" style="left:879px;top:474px;font-size:10.2px;line-height:14px;color:#3a3a3a;letter-spacing:-0.32px;">Systems</span>
</section>
</main>
</div></div>
</body>
</html>
